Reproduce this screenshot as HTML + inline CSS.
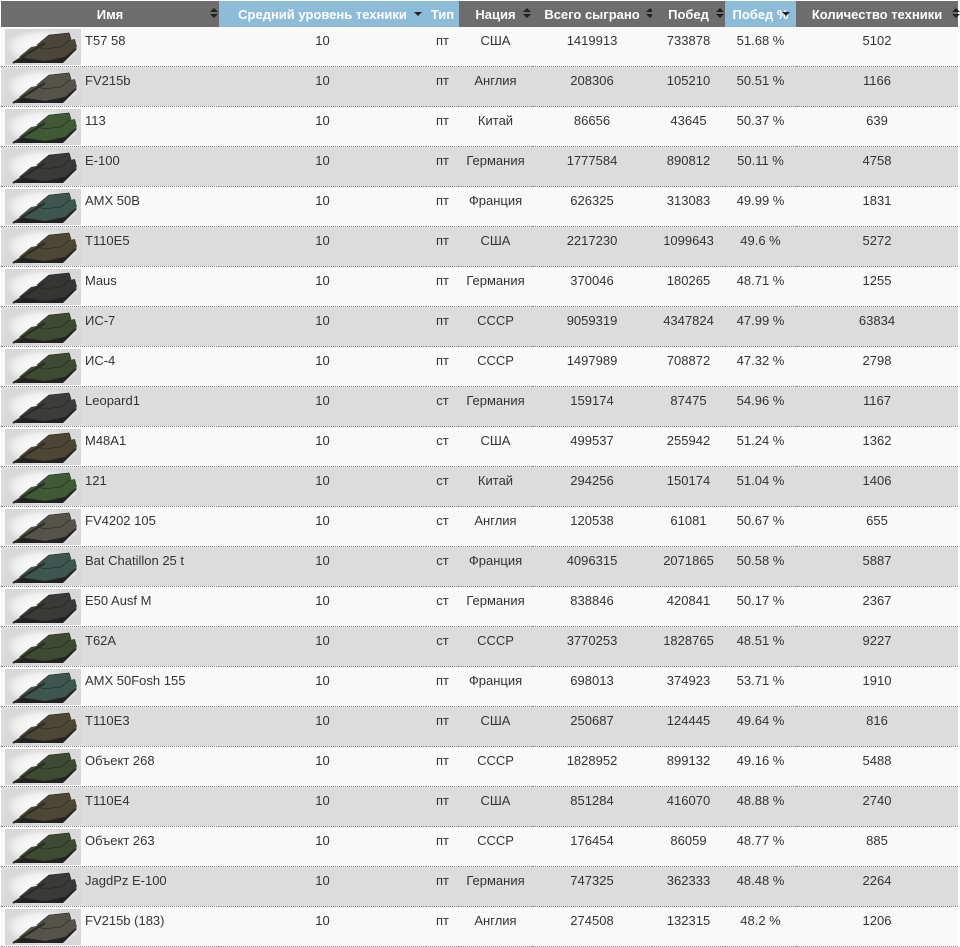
<!DOCTYPE html>
<html><head><meta charset="utf-8"><style>
body{margin:0;background:#fff;font-family:"Liberation Sans",Arial,sans-serif;}
table{position:absolute;left:1px;top:1px;border-collapse:collapse;table-layout:fixed;width:957px;}
th{height:26px;padding:0;background:#6d6d6d;color:#fff;font-size:13px;font-weight:bold;position:relative;text-align:center;white-space:nowrap;}
th.b{background:#8dbcd9;}
th i{position:absolute;right:5px;top:8px;width:0;height:0;}
th i.s::before{content:"";position:absolute;left:-4px;top:-1px;border:4px solid transparent;border-bottom:4px solid #222;border-top:0;}
th i.s::after{content:"";position:absolute;left:-4px;top:5px;border:4px solid transparent;border-top:4px solid #222;border-bottom:0;}
th i.d::after{content:"";position:absolute;left:-4px;top:3px;border:4px solid transparent;border-top:4px solid #222;border-bottom:0;}
td{height:39px;padding:0;border-bottom:1px dotted #888;font-size:13px;color:#333;text-align:center;vertical-align:top;line-height:28px;}
tr.o td{background:#f9f9f9}
tr.e td{background:#dcdcdc}
td.n{text-align:left;position:relative;padding-left:84px;}
td.n svg{position:absolute;left:4px;top:2px;}
</style></head><body>
<svg width="0" height="0" style="position:absolute"><defs><radialGradient id="g"><stop offset="0" stop-color="#fff"/><stop offset=".7" stop-color="#f0f0f0"/><stop offset="1" stop-color="#d8d8d8"/></radialGradient></defs></svg>
<table>
<colgroup><col style="width:218px"><col style="width:207px"><col style="width:33px"><col style="width:73px"><col style="width:120px"><col style="width:73px"><col style="width:71px"><col style="width:162px"></colgroup>
<tr><th>Имя<i class="s"></i></th><th class="b">Средний уровень техники<i class="d" style="right:8px"></i></th><th class="b">Тип</th><th>Нация<i class="s"></i></th><th>Всего сыграно<i class="s" style="right:2px"></i></th><th>Побед<i class="s"></i></th><th class="b">Побед %<i class="d" style="right:10px"></i></th><th>Количество техники<i class="s" style="right:2px"></i></th></tr>
<tbody id="tb"></tbody></table>
<script>
var d=[["T57 58","пт","США","1419913","733878","51.68 %","5102","#4a4638"],
["FV215b","пт","Англия","208306","105210","50.51 %","1166","#55524a"],
["113","пт","Китай","86656","43645","50.37 %","639","#3f5a35"],
["E-100","пт","Германия","1777584","890812","50.11 %","4758","#3a3a38"],
["AMX 50B","пт","Франция","626325","313083","49.99 %","1831","#3d5650"],
["T110E5","пт","США","2217230","1099643","49.6 %","5272","#4d4836"],
["Maus","пт","Германия","370046","180265","48.71 %","1255","#353533"],
["ИС-7","пт","СССР","9059319","4347824","47.99 %","63834","#3e4a32"],
["ИС-4","пт","СССР","1497989","708872","47.32 %","2798","#3e4a32"],
["Leopard1","ст","Германия","159174","87475","54.96 %","1167","#3c3c3a"],
["M48A1","ст","США","499537","255942","51.24 %","1362","#4d4634"],
["121","ст","Китай","294256","150174","51.04 %","1406","#3f5a35"],
["FV4202 105","ст","Англия","120538","61081","50.67 %","655","#55524a"],
["Bat Chatillon 25 t","ст","Франция","4096315","2071865","50.58 %","5887","#3d5650"],
["E50 Ausf M","ст","Германия","838846","420841","50.17 %","2367","#3a3a38"],
["T62A","ст","СССР","3770253","1828765","48.51 %","9227","#3e4a32"],
["AMX 50Fosh 155","пт","Франция","698013","374923","53.71 %","1910","#3d5650"],
["T110E3","пт","США","250687","124445","49.64 %","816","#4d4836"],
["Объект 268","пт","СССР","1828952","899132","49.16 %","5488","#3e4a32"],
["T110E4","пт","США","851284","416070","48.88 %","2740","#4d4836"],
["Объект 263","пт","СССР","176454","86059","48.77 %","885","#3e4a32"],
["JagdPz E-100","пт","Германия","747325","362333","48.48 %","2264","#3a3a38"],
["FV215b (183)","пт","Англия","274508","132315","48.2 %","1206","#55524a"]];
var h="";d.forEach(function(r,i){h+='<tr class="'+(i%2?"e":"o")+'"><td class="n"><svg width="76" height="36"><rect width="76" height="36" fill="url(#g)"/><polygon points="10,34 22,24 66,16 72,20 58,34" fill="#222"/><polygon points="14,28 26,18 70,10 72,18 60,28 40,32" fill="'+r[7]+'"/><polygon points="32,16 44,6 64,4 66,10 56,18 38,20" fill="'+r[7]+'" stroke="#222" stroke-width=".6"/><line x1="8" y1="34" x2="40" y2="14" stroke="#2a2a24" stroke-width="2"/></svg>'+r[0]+'</td><td>10</td><td>'+r[1]+'</td><td>'+r[2]+'</td><td>'+r[3]+'</td><td>'+r[4]+'</td><td>'+r[5]+'</td><td>'+r[6]+'</td></tr>';});
document.getElementById("tb").innerHTML=h;
</script>
</body></html>
